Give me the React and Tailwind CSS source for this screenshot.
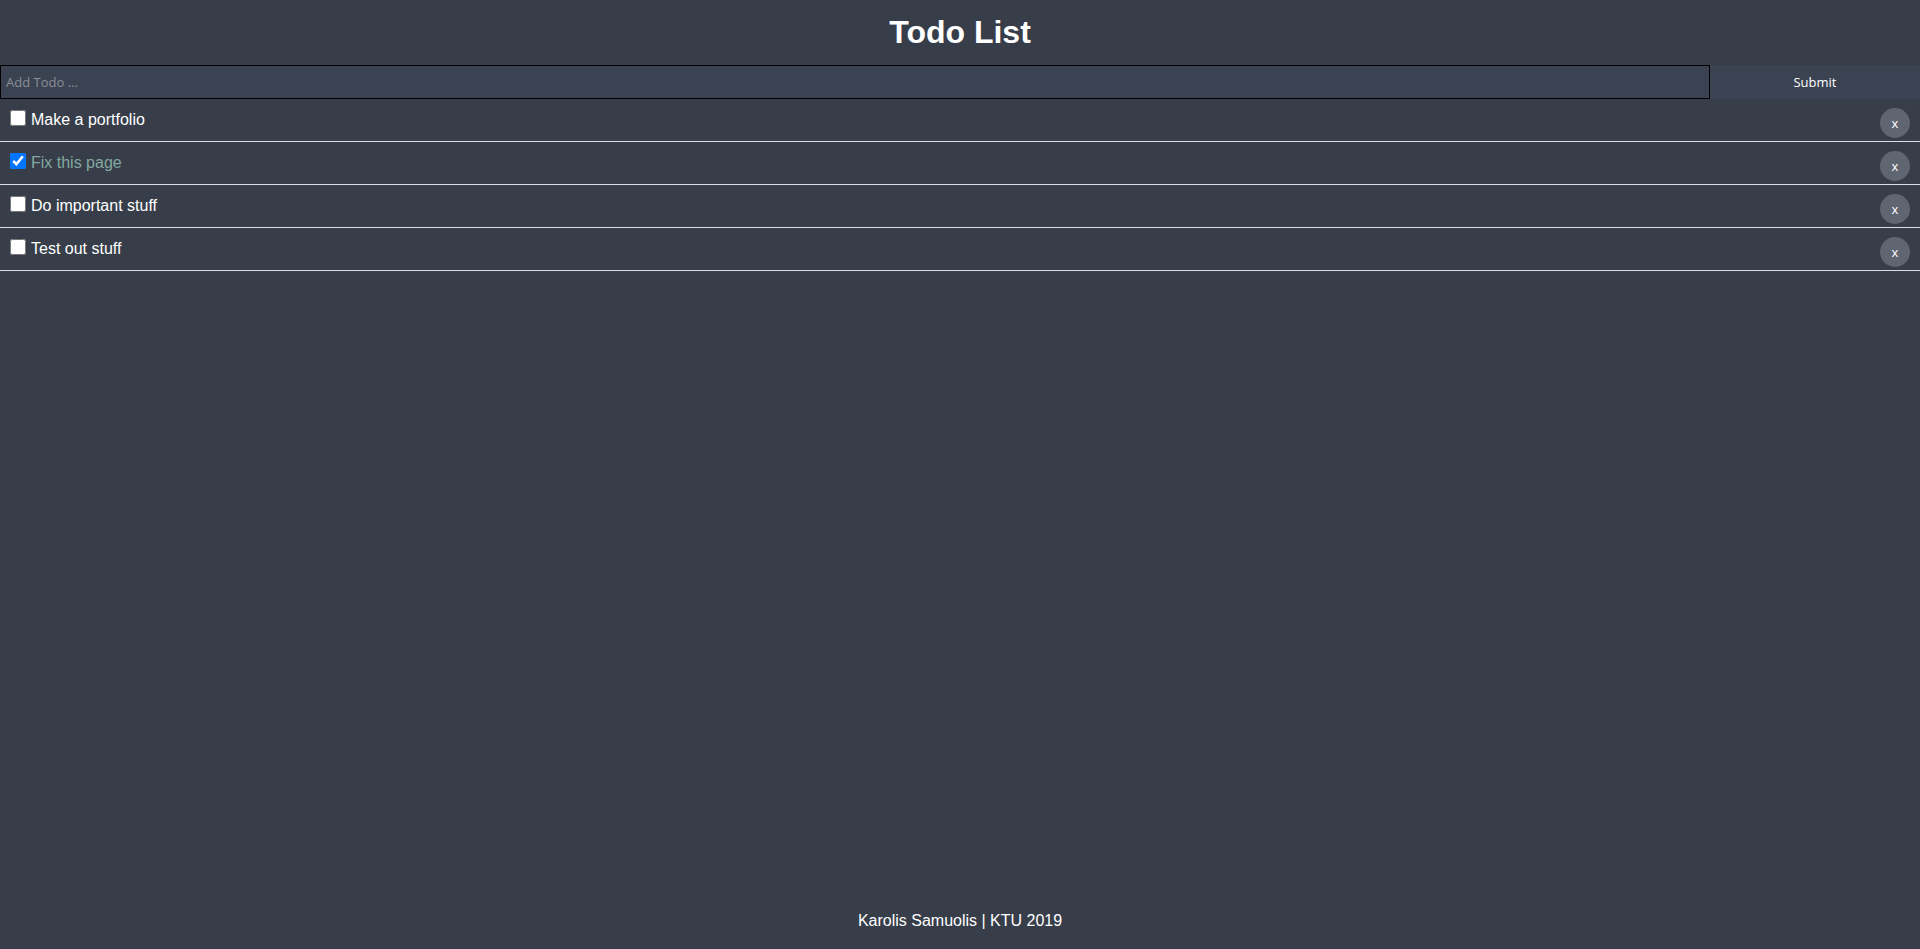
import React, { useState } from 'react';

const initialTodos = [
  { id: 1, title: 'Make a portfolio', completed: false },
  { id: 2, title: 'Fix this page', completed: true },
  { id: 3, title: 'Do important stuff', completed: false },
  { id: 4, title: 'Test out stuff', completed: false },
];

function TodoItem({ todo, onToggle, onDelete }) {
  return (
    <div className="flex items-start h-[43px] border-b border-[#d8dee9] pl-[10px] pr-[10px] pt-[11px]">
      <input
        type="checkbox"
        checked={todo.completed}
        onChange={() => onToggle(todo.id)}
        className="m-0 w-[16px] h-[16px] shrink-0"
      />
      <span
        className={`ml-[5px] mt-[1px] text-[16px] leading-[18px] font-['Liberation_Sans',Arial,sans-serif] ${
          todo.completed ? 'text-[#84a8a0]' : 'text-white'
        }`}
      >
        {todo.title}
      </span>
      <button
        onClick={() => onDelete(todo.id)}
        className="ml-auto -mt-[2px] w-[30px] h-[30px] rounded-full bg-[#5f6571] text-white text-[13px] leading-none flex items-center justify-center font-['Open_Sans',sans-serif] cursor-pointer"
      >
        x
      </button>
    </div>
  );
}

export default function App() {
  const [todos, setTodos] = useState(initialTodos);
  const [text, setText] = useState('');

  const toggle = (id) =>
    setTodos(todos.map((t) => (t.id === id ? { ...t, completed: !t.completed } : t)));
  const remove = (id) => setTodos(todos.filter((t) => t.id !== id));
  const submit = (e) => {
    e.preventDefault();
    if (!text.trim()) return;
    setTodos([...todos, { id: Date.now(), title: text, completed: false }]);
    setText('');
  };

  return (
    <div className="min-h-screen flex flex-col bg-[#373e4a] text-white font-['Liberation_Sans',Arial,sans-serif]">
      <header className="h-[65px] pb-[2px] flex items-center justify-center">
        <h1 className="text-[32px] font-bold leading-none">Todo List</h1>
      </header>

      <form onSubmit={submit} className="flex h-[34px]">
        <input
          type="text"
          value={text}
          onChange={(e) => setText(e.target.value)}
          placeholder="Add Todo ..."
          className="flex-1 min-w-0 border border-black bg-[#3b4252] px-[5px] pt-[2px] text-[13px] text-white placeholder:text-[#8a8f99] outline-none font-['Open_Sans',sans-serif]"
        />
        <button
          type="submit"
          className="w-[210px] bg-[#3b4252] pt-[2px] text-[13px] text-white font-['Open_Sans',sans-serif] cursor-pointer"
        >
          Submit
        </button>
      </form>

      <div>
        {todos.map((todo) => (
          <TodoItem key={todo.id} todo={todo} onToggle={toggle} onDelete={remove} />
        ))}
      </div>

      <footer className="mt-auto h-[58px] pt-[2px] flex items-center justify-center text-[16px]">
        Karolis Samuolis | KTU 2019
      </footer>
    </div>
  );
}
